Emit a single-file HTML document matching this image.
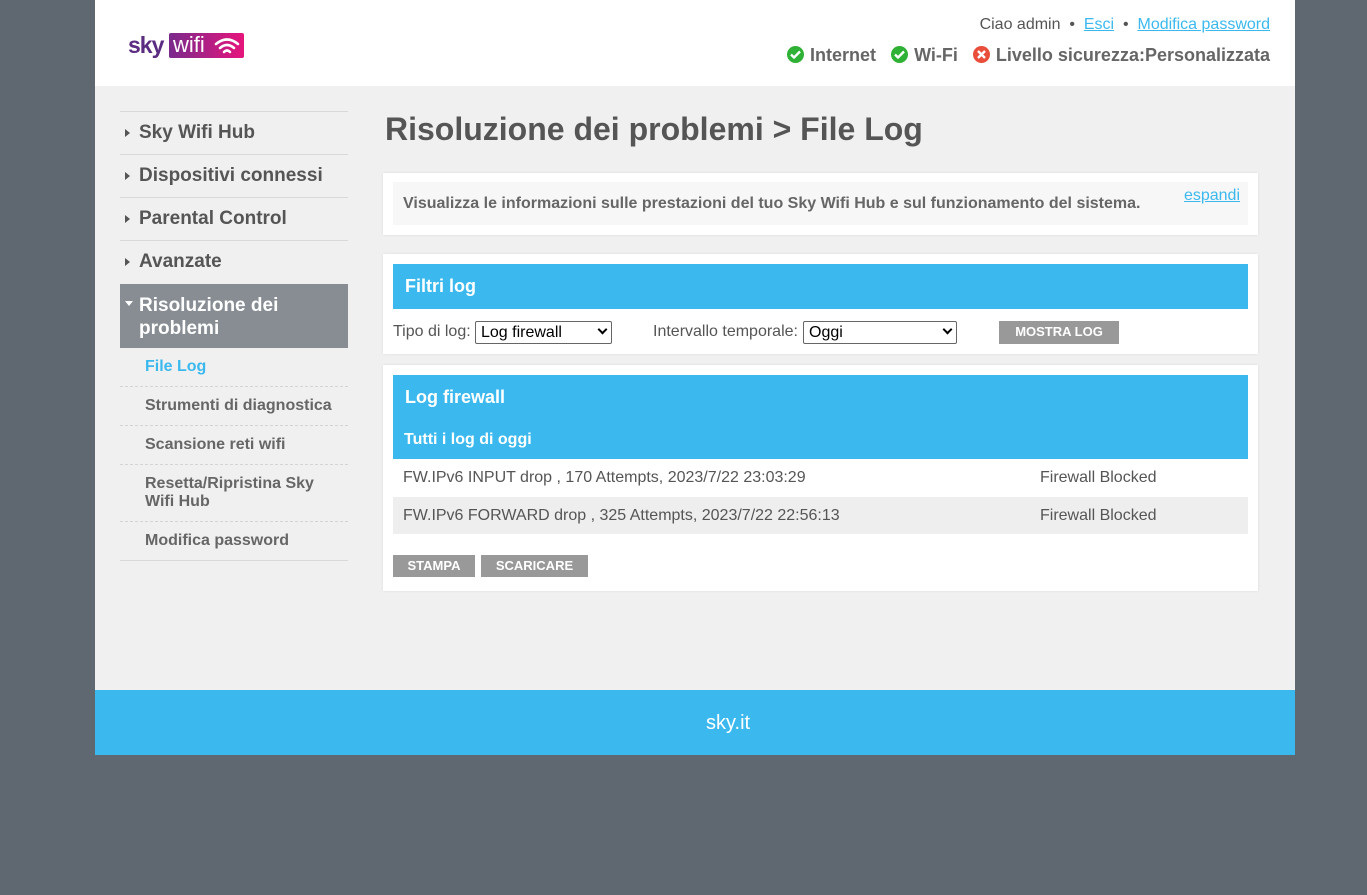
<!DOCTYPE html>
<html><head><meta charset="utf-8"><style>
*{margin:0;padding:0;box-sizing:border-box}
body{width:1367px;height:895px;background:#5f6770;font-family:"Liberation Sans",sans-serif;position:relative;overflow:hidden;color:#555}
.a{position:absolute;white-space:nowrap}
#wrap{position:absolute;left:95px;top:0;width:1200px;height:755px;background:#f0f0f0}
#hdr{position:absolute;left:0;top:0;width:1200px;height:86px;background:#fff}
#ftr{position:absolute;left:0;top:690px;width:1200px;height:65px;background:#3bb9ef;color:#fff;font-size:20px;line-height:67px}
.line{position:absolute;left:25px;width:228px;height:1px;background:#d8d8d8}
.dash{position:absolute;left:25px;width:228px;border-top:1px dashed #d4d4d4}
.nav{position:absolute;left:44px;font-size:19px;font-weight:bold;color:#555}
.tri{position:absolute;left:30px;width:0;height:0;border-top:4px solid transparent;border-bottom:4px solid transparent;border-left:5px solid #555}
.sub{position:absolute;left:50px;font-size:16px;font-weight:bold;color:#666;line-height:18px}
.box{position:absolute;left:288px;width:875px;background:#fff;box-shadow:0 0 3px rgba(0,0,0,.08)}
.blue{position:absolute;left:10px;width:855px;background:#3bb9ef;color:#fff;font-weight:bold}
.btn{position:absolute;background:#999;color:#fff;font-weight:bold;font-size:13px;text-align:center;line-height:22px}
.sel{position:absolute;border:1px solid #666;border-radius:2px;background:#fff;color:#000;font-size:16px;height:23px;line-height:21px;padding-left:5px}
.sel i{position:absolute;right:5px;width:7px;height:7px;border-right:2px solid #000;border-bottom:2px solid #000;transform:rotate(45deg);top:4px}
.ic{display:inline-block;width:17px;height:17px;border-radius:50%;vertical-align:-2px;margin-right:6px;position:relative}
</style></head><body>
<div id="wrap">
<div id="hdr">
 <div class="a" style="left:33px;top:32px;font-size:23px;font-weight:bold;color:#5a2d82;letter-spacing:-1px">sky</div>
 <div class="a" style="left:74px;top:33px;width:75px;height:25px;background:linear-gradient(90deg,#7a2a8c,#e6157c);border-radius:2px;color:#fff;font-size:22px;padding-left:4px;line-height:24px">wifi
  <svg style="position:absolute;left:44px;top:3px" width="28" height="18" viewBox="0 0 28 18"><g fill="none" stroke="#fff" stroke-width="2.6" stroke-linecap="round"><path d="M3 8 Q14 -1 25 8"/><path d="M7 12 Q14 6 21 12"/><path d="M11 16 Q14 13 17 16"/></g></svg></div>
 <div class="a" style="right:25px;top:16px;font-size:16px;color:#555">Ciao admin &nbsp;•&nbsp; <span style="color:#3bb9ef;text-decoration:underline">Esci</span> &nbsp;•&nbsp; <span style="color:#3bb9ef;text-decoration:underline">Modifica password</span></div>
 <div class="a" style="right:25px;top:45px;font-size:18px;font-weight:bold;color:#666">
  <span class="ic" style="background:#2eb135"><svg style="position:absolute;left:3px;top:4px" width="11" height="9"><path d="M1 4.5 L4 7.5 L10 1.5" stroke="#fff" stroke-width="2.4" fill="none"/></svg></span>Internet &nbsp;
  <span class="ic" style="background:#2eb135"><svg style="position:absolute;left:3px;top:4px" width="11" height="9"><path d="M1 4.5 L4 7.5 L10 1.5" stroke="#fff" stroke-width="2.4" fill="none"/></svg></span>Wi-Fi &nbsp;
  <span class="ic" style="background:#e94e3b"><svg style="position:absolute;left:4px;top:4px" width="9" height="9"><path d="M1 1 L8 8 M8 1 L1 8" stroke="#fff" stroke-width="2.4"/></svg></span>Livello sicurezza:Personalizzata</div>
</div>

<div class="line" style="top:111px"></div>
<div class="tri" style="top:129px"></div><div class="nav" style="top:122px">Sky Wifi Hub</div>
<div class="line" style="top:154px"></div>
<div class="tri" style="top:172px"></div><div class="nav" style="top:165px">Dispositivi connessi</div>
<div class="line" style="top:197px"></div>
<div class="tri" style="top:215px"></div><div class="nav" style="top:208px">Parental Control</div>
<div class="line" style="top:240px"></div>
<div class="tri" style="top:258px"></div><div class="nav" style="top:251px">Avanzate</div>
<div class="a" style="left:25px;top:284px;width:228px;height:64px;background:#878d93"></div>
<div class="a" style="left:30px;top:301px;border-left:4px solid transparent;border-right:4px solid transparent;border-top:5px solid #fff"></div>
<div class="nav" style="top:294px;color:#fff;line-height:23px">Risoluzione dei<br>problemi</div>
<div class="sub" style="top:358px;color:#3bb9ef">File Log</div>
<div class="dash" style="top:386px"></div>
<div class="sub" style="top:397px">Strumenti di diagnostica</div>
<div class="dash" style="top:425px"></div>
<div class="sub" style="top:436px">Scansione reti wifi</div>
<div class="dash" style="top:464px"></div>
<div class="sub" style="top:475px">Resetta/Ripristina Sky<br>Wifi Hub</div>
<div class="dash" style="top:521px"></div>
<div class="sub" style="top:532px">Modifica password</div>
<div class="line" style="top:560px"></div>

<div class="a" style="left:290px;top:111px;font-size:32px;font-weight:bold;color:#555">Risoluzione dei problemi &gt; File Log</div>

<div class="box" style="top:173px;height:62px">
 <div class="a" style="left:10px;top:9px;width:855px;height:43px;background:#f7f7f7"></div>
 <div class="a" style="left:20px;top:22px;font-size:16px;font-weight:bold;color:#666">Visualizza le informazioni sulle prestazioni del tuo Sky Wifi Hub e sul funzionamento del sistema.</div>
 <div class="a" style="right:18px;top:14px;font-size:16px;color:#3bb9ef;text-decoration:underline">espandi</div>
</div>

<div class="box" style="top:254px;height:100px">
 <div class="blue" style="top:10px;height:45px;font-size:18px;line-height:45px;padding-left:12px">Filtri log</div>
 <div class="a" style="left:10px;top:69px;font-size:16px;color:#555">Tipo di log:</div>
 <div class="sel" style="left:92px;top:67px;width:137px">Log firewall<i></i></div>
 <div class="a" style="left:270px;top:69px;font-size:16px;color:#555">Intervallo temporale:</div>
 <div class="sel" style="left:420px;top:67px;width:154px">Oggi<i></i></div>
 <div class="btn" style="left:616px;top:67px;width:120px;height:23px">MOSTRA LOG</div>
</div>

<div class="box" style="top:365px;height:226px">
 <div class="blue" style="top:10px;height:84px">
  <div class="a" style="left:12px;top:12px;font-size:18px">Log firewall</div>
  <div class="a" style="left:11px;top:56px;font-size:16px">Tutti i log di oggi</div>
 </div>
 <div class="a" style="left:20px;top:104px;font-size:16px;color:#555">FW.IPv6 INPUT drop , 170 Attempts, 2023/7/22 23:03:29</div>
 <div class="a" style="left:657px;top:104px;font-size:16px;color:#555">Firewall Blocked</div>
 <div class="a" style="left:10px;top:132px;width:855px;height:37px;background:#eee"></div>
 <div class="a" style="left:20px;top:142px;font-size:16px;color:#555">FW.IPv6 FORWARD drop , 325 Attempts, 2023/7/22 22:56:13</div>
 <div class="a" style="left:657px;top:142px;font-size:16px;color:#555">Firewall Blocked</div>
 <div class="btn" style="left:10px;top:190px;width:82px;height:22px">STAMPA</div>
 <div class="btn" style="left:98px;top:190px;width:107px;height:22px">SCARICARE</div>
</div>

<div id="ftr"><span style="position:absolute;left:611px">sky.it</span></div>
</div>
</body></html>
